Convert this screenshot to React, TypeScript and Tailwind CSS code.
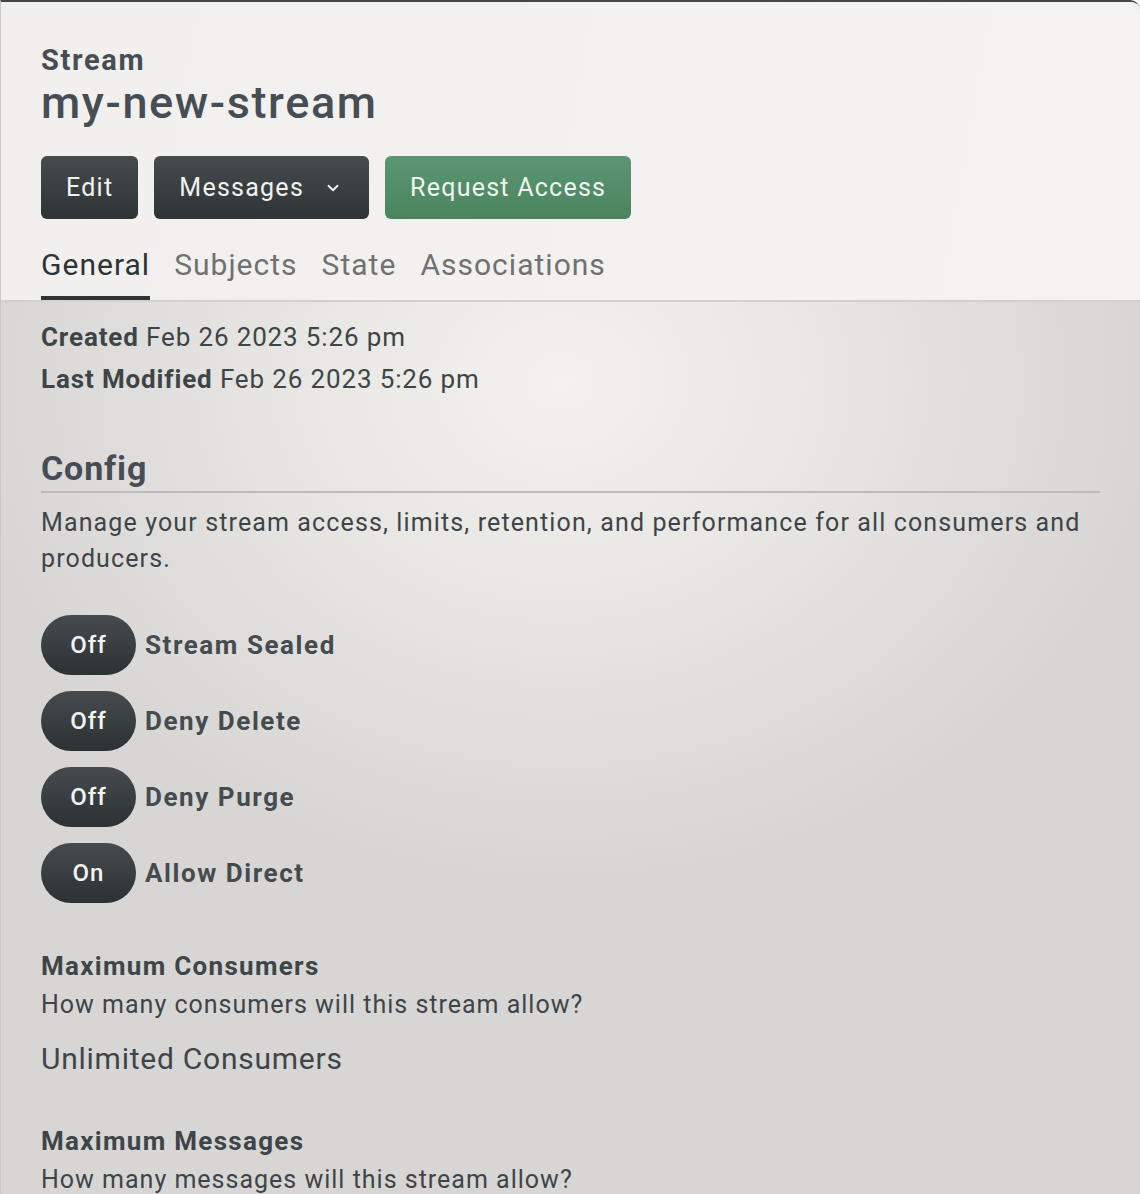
import { ChevronDown } from 'lucide-react';

const font = { fontFamily: 'Roboto, "Noto Sans", sans-serif' };

function Toggle({ on, label }: { on: boolean; label: string }) {
	return (
		<div className="flex items-center gap-[9px] h-[60px]">
			<div className="w-[95px] h-[60px] rounded-full bg-gradient-to-b from-[#454b4e] to-[#2c3234] flex items-center justify-center text-[24px] text-[#f3f3f3] font-medium tracking-[0.04em]">
				{on ? 'On' : 'Off'}
			</div>
			<span className="text-[26px] font-bold text-[#454b4e] tracking-[0.06em]">{label}</span>
		</div>
	);
}

export default function App() {
	const tabs = ['General', 'Subjects', 'State', 'Associations'];
	return (
		<div style={font} className="w-[1140px] h-[1194px] overflow-hidden border-t-2 border-[#45454d] border-l border-l-[#c9c9c6] rounded-tr-[10px] bg-[#f2f1ef] flex flex-col">
			<header className="px-[40px] pt-[41px] border-b-2 border-[#d3d1ce] bg-[linear-gradient(100deg,#f1f0ee_0%,#f4f3f1_100%)]">
				<div className="text-[29px] font-bold text-[#474d55] leading-[34px] tracking-[0.057em]">Stream</div>
				<h1 className="text-[45px] font-medium text-[#474d55] leading-[52px] tracking-[0.036em]">my-new-stream</h1>
				<div className="flex gap-4 mt-[27px]">
					<button className="h-[63px] px-[25px] rounded-[6px] bg-gradient-to-b from-[#464c4e] to-[#2e3436] text-[25px] text-[#f2f2f2] tracking-[0.05em]">Edit</button>
					<button className="h-[63px] pl-[25px] pr-[27px] rounded-[6px] bg-gradient-to-b from-[#464c4e] to-[#2e3436] text-[25px] text-[#f2f2f2] tracking-[0.05em] flex items-center gap-[20px]">
						Messages
						<ChevronDown size={18} strokeWidth={2.5} />
					</button>
					<button className="h-[63px] px-[25px] rounded-[6px] bg-gradient-to-b from-[#5b9572] to-[#4a8560] text-[25px] text-[#f2f2f2] tracking-[0.05em]">Request Access</button>
				</div>
				<nav className="flex gap-[24px] mt-[28px]">
					{tabs.map((t, i) => (
						<div key={t} className={`text-[30px] leading-[36px] pb-[13px] border-b-4 tracking-[0.034em] ${i === 0 ? 'border-[#2d3436] text-[#2d3436]' : 'border-transparent text-[#707170]'}`}>
							{t}
						</div>
					))}
				</nav>
			</header>
			<main className="flex-1 px-[40px] pt-[14px] border-l border-l-[#93a497] -ml-px bg-[radial-gradient(ellipse_600px_500px_at_560px_80px,#f4f2ef_0%,#e6e5e2_50%,#d8d5d5_100%)]">
				<div className="text-[26px] text-[#3e4548] leading-[42px] tracking-[0.033em]">
					<div><span className="font-bold">Created</span> Feb 26 2023 5:26 pm</div>
					<div><span className="font-bold">Last Modified</span> Feb 26 2023 5:26 pm</div>
				</div>
				<h2 className="mt-[46px] text-[34px] font-bold text-[#474d55] leading-[44px] pb-[1px] border-b-2 border-[#bdbcbc] tracking-[0.025em]">Config</h2>
				<p className="mt-[12px] text-[25px] leading-[36px] text-[#3e4548] tracking-[0.045em]">
					Manage your stream access, limits, retention, and performance for all consumers and producers.
				</p>
				<div className="mt-[38px] flex flex-col gap-[16px]">
					<Toggle on={false} label="Stream Sealed" />
					<Toggle on={false} label="Deny Delete" />
					<Toggle on={false} label="Deny Purge" />
					<Toggle on={true} label="Allow Direct" />
				</div>
				<div className="mt-[44px] text-[#3e4548]">
					<div className="text-[26px] font-bold leading-[38px] tracking-[0.05em]">Maximum Consumers</div>
					<div className="text-[25px] leading-[40px] tracking-[0.04em]">How many consumers will this stream allow?</div>
					<div className="text-[30px] leading-[54px] mt-[7px] tracking-[0.025em]">Unlimited Consumers</div>
				</div>
				<div className="mt-[36px] text-[#3e4548]">
					<div className="text-[26px] font-bold leading-[38px] tracking-[0.05em]">Maximum Messages</div>
					<div className="text-[25px] leading-[40px] tracking-[0.04em]">How many messages will this stream allow?</div>
				</div>
			</main>
		</div>
	);
}
